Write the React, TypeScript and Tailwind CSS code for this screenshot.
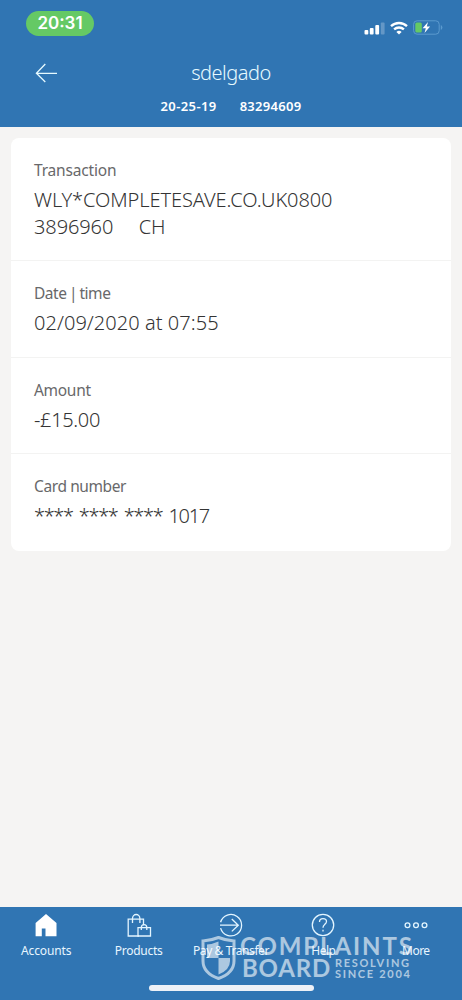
import type { ReactNode } from 'react';

type Detail = {
  label: string;
  labelClass: string;
  lines: string[];
  valueClass: string;
};

const details: Detail[] = [
  {
    label: 'Transaction',
    labelClass: 'tracking-[-0.17px]',
    lines: ['WLY*COMPLETESAVE.CO.UK0800', '3896960     CH'],
    valueClass: 'tracking-[-0.1px]',
  },
  {
    label: 'Date | time',
    labelClass: 'tracking-[-0.45px] [word-spacing:-1.2px]',
    lines: ['02/09/2020 at 07:55'],
    valueClass: 'tracking-[0.05px]',
  },
  {
    label: 'Amount',
    labelClass: 'tracking-[-0.3px]',
    lines: ['-£15.00'],
    valueClass: 'tracking-[-0.35px]',
  },
  {
    label: 'Card number',
    labelClass: 'tracking-[-0.4px]',
    lines: ['**** **** **** 1017'],
    valueClass: 'tracking-[-1.35px] [word-spacing:2.3px]',
  },
];

function StatusBar() {
  return (
    <div className="flex h-[47px] items-start justify-between pl-[26px] pr-[19px] pt-[11px]">
      <div className="flex h-[25px] w-[68px] items-center justify-center rounded-full bg-[#65c965] font-[Inter] text-[17px] font-semibold text-white">
        20:31
      </div>
      <div className="flex items-center pt-[9px]">
        <svg width="21" height="14" viewBox="0 0 21 14" fill="#fff">
          <rect x="0.5" y="9" width="3.8" height="4.6" rx="1" />
          <rect x="5.8" y="7" width="3.8" height="6.6" rx="1" />
          <rect x="11.3" y="4" width="3.8" height="9.6" rx="1" />
          <rect x="16.8" y="1.5" width="3.8" height="12.1" rx="1" opacity="0.25" />
        </svg>
        <svg className="ml-[5px]" width="18" height="14" viewBox="0 0 18 14" fill="none" stroke="#fff" strokeWidth="2.3">
          <path d="M1 5.2a11.6 11.6 0 0 1 16 0" />
          <path d="M4.1 8.4a7.2 7.2 0 0 1 9.8 0" />
          <path d="M9 13.6 6.4 11a3.8 3.8 0 0 1 5.2 0z" fill="#fff" stroke="none" />
        </svg>
        <svg className="ml-[5px]" width="30" height="15" viewBox="0 0 30 15" fill="none">
          <rect x="0.6" y="0.8" width="25.6" height="13.4" rx="3.5" stroke="#5b9ace" />
          <rect x="2.3" y="2.5" width="6.5" height="10" rx="1.5" fill="#65c965" />
          <path d="M27.8 5v5q1.6-.8 1.6-2.5T27.8 5" fill="#5b9ace" />
          <path d="M15 2 9.6 8.2h3.2L11.5 13l5.6-6.5h-3.3z" fill="#fff" />
        </svg>
      </div>
    </div>
  );
}

function Header() {
  return (
    <header className="h-[127px] bg-[#3075b3] text-white">
      <StatusBar />
      <div className="grid h-[52px] grid-cols-[100px_1fr_100px] items-center">
        <svg className="ml-[35px]" width="23" height="20" viewBox="0 0 23 20" fill="none" stroke="#e6faff" strokeWidth="1.3">
          <path d="M22 10.3H1.4M10.3 1 1.4 10.3l8.9 8.7" />
        </svg>
        <h1 className="text-center text-[20px] font-[350] tracking-[-0.5px] text-[#e6faff]">
          sdelgado
        </h1>
      </div>
      <div className="flex h-4 items-center justify-center gap-[23px] text-[13px] font-semibold">
        <span className="tracking-[0.4px]">20-25-19</span>
        <span className="tracking-[0.3px]">83294609</span>
      </div>
    </header>
  );
}

function Row({ detail }: { detail: Detail }) {
  return (
    <div className="border-b border-[#f3f3f2] px-[23px] pb-[20.3px] pt-[22px] last:border-b-0 last:pb-[22px]">
      <div className={`text-[15.5px] leading-5 text-[#68686a] ${detail.labelClass}`}>
        {detail.label}
      </div>
      <div className={`mt-[6px] whitespace-pre text-[20px] font-[350] leading-[27px] text-[#343434] ${detail.valueClass}`}>
        {detail.lines.map((line) => (
          <div key={line}>{line}</div>
        ))}
      </div>
    </div>
  );
}

function Tab({ label, className, children }: { label: string; className: string; children: ReactNode }) {
  return (
    <div className="flex flex-1 flex-col items-center">
      <svg width="26" height="26" viewBox="0 0 26 26" fill="none" stroke="#e3f5ff" strokeWidth="1.3">
        {children}
      </svg>
      <span className={`mt-[5px] whitespace-nowrap text-[12px] leading-4 ${className}`}>{label}</span>
    </div>
  );
}

function Watermark() {
  return (
    <div className="absolute left-[201px] top-[28px] flex font-[Lato] font-bold text-white opacity-60">
      <svg width="35" height="46" viewBox="0 0 35 46">
        <path
          d="M2 6Q10 5.500 17.500 2.500 25 5.500 33 6V26Q33 38 17.500 43.500 2 38 2 26z"
          fill="none"
          stroke="#fff"
          strokeWidth="3"
        />
        <path d="M17.500 6.500V23H6V9.500q6-.5 11.500-3M17.500 23H29v3q0 9-11.500 13.500z" fill="#fff" />
      </svg>
      <div className="pl-[4px]">
        <div className="h-[22px] whitespace-nowrap text-[24px] leading-[21px] tracking-[1.9px]">COMPLAINTS</div>
        <div className="flex pl-[2px]">
          <span className="w-[92px] text-[24px] leading-[22px] tracking-[0.8px]">BOARD</span>
          <div className="whitespace-nowrap pl-px pt-px text-[11px] leading-[10.5px]">
            <div className="tracking-[1.7px]">RESOLVING</div>
            <div className="tracking-[1.7px]">SINCE 2004</div>
          </div>
        </div>
      </div>
    </div>
  );
}

function BottomNav() {
  return (
    <nav className="relative h-[93px] bg-[#3075b3] text-[#e8f6ff]">
      <div className="flex pt-[5px]">
        <Tab label="Accounts" className="tracking-[-0.1px]">
          <path d="M13 2 2.600 11v13.200h6.200v-7.700h3.700v7.700h11V11z" fill="#fff" stroke="none" />
        </Tab>
        <Tab label="Products" className="tracking-[-0.25px]">
          <path d="M13 24H2.200V7.200h15.300v6M6.500 11V6.500a3.700 4 0 0 1 7.400 0V11" />
          <path d="M12 24v-8.300h12.500V24zM15.300 18v-2.300a2.700 3 0 0 1 5.500 0V18" />
        </Tab>
        <Tab label="Pay &amp; Transfer" className="tracking-[-0.4px]">
          <path d="M2.600 10.300a10.700 10.700 0 1 1 0 5.800M2 13.200h18.300M13.800 7l6.500 6.200-6.500 6.200" />
        </Tab>
        <Tab label="Help" className="tracking-[-0.5px]">
          <circle cx="13" cy="13" r="10.700" />
          <path d="M9.500 10q0-3.400 3.500-3.400t3.500 3q0 1.500-1.800 2.800Q13 13.700 13 15.700M13 17.700v1.700" />
        </Tab>
        <Tab label="More" className="tracking-[-0.5px]">
          <circle cx="4.500" cy="13.200" r="2.400" />
          <circle cx="13" cy="13.200" r="2.400" />
          <circle cx="21.500" cy="13.200" r="2.400" />
        </Tab>
      </div>
      <Watermark />
      <div className="absolute left-[149px] top-[78px] h-[6px] w-[165px] rounded-full bg-[#edf1f7]" />
    </nav>
  );
}

export default function App() {
  return (
    <div className="flex h-[1000px] w-[462px] flex-col overflow-hidden bg-[#f5f4f3] font-['Noto_Sans',sans-serif]">
      <Header />
      <main className="flex-1 px-[11px] pt-[11px]">
        <section className="rounded-lg bg-white">
          {details.map((detail) => (
            <Row key={detail.label} detail={detail} />
          ))}
        </section>
      </main>
      <BottomNav />
    </div>
  );
}
